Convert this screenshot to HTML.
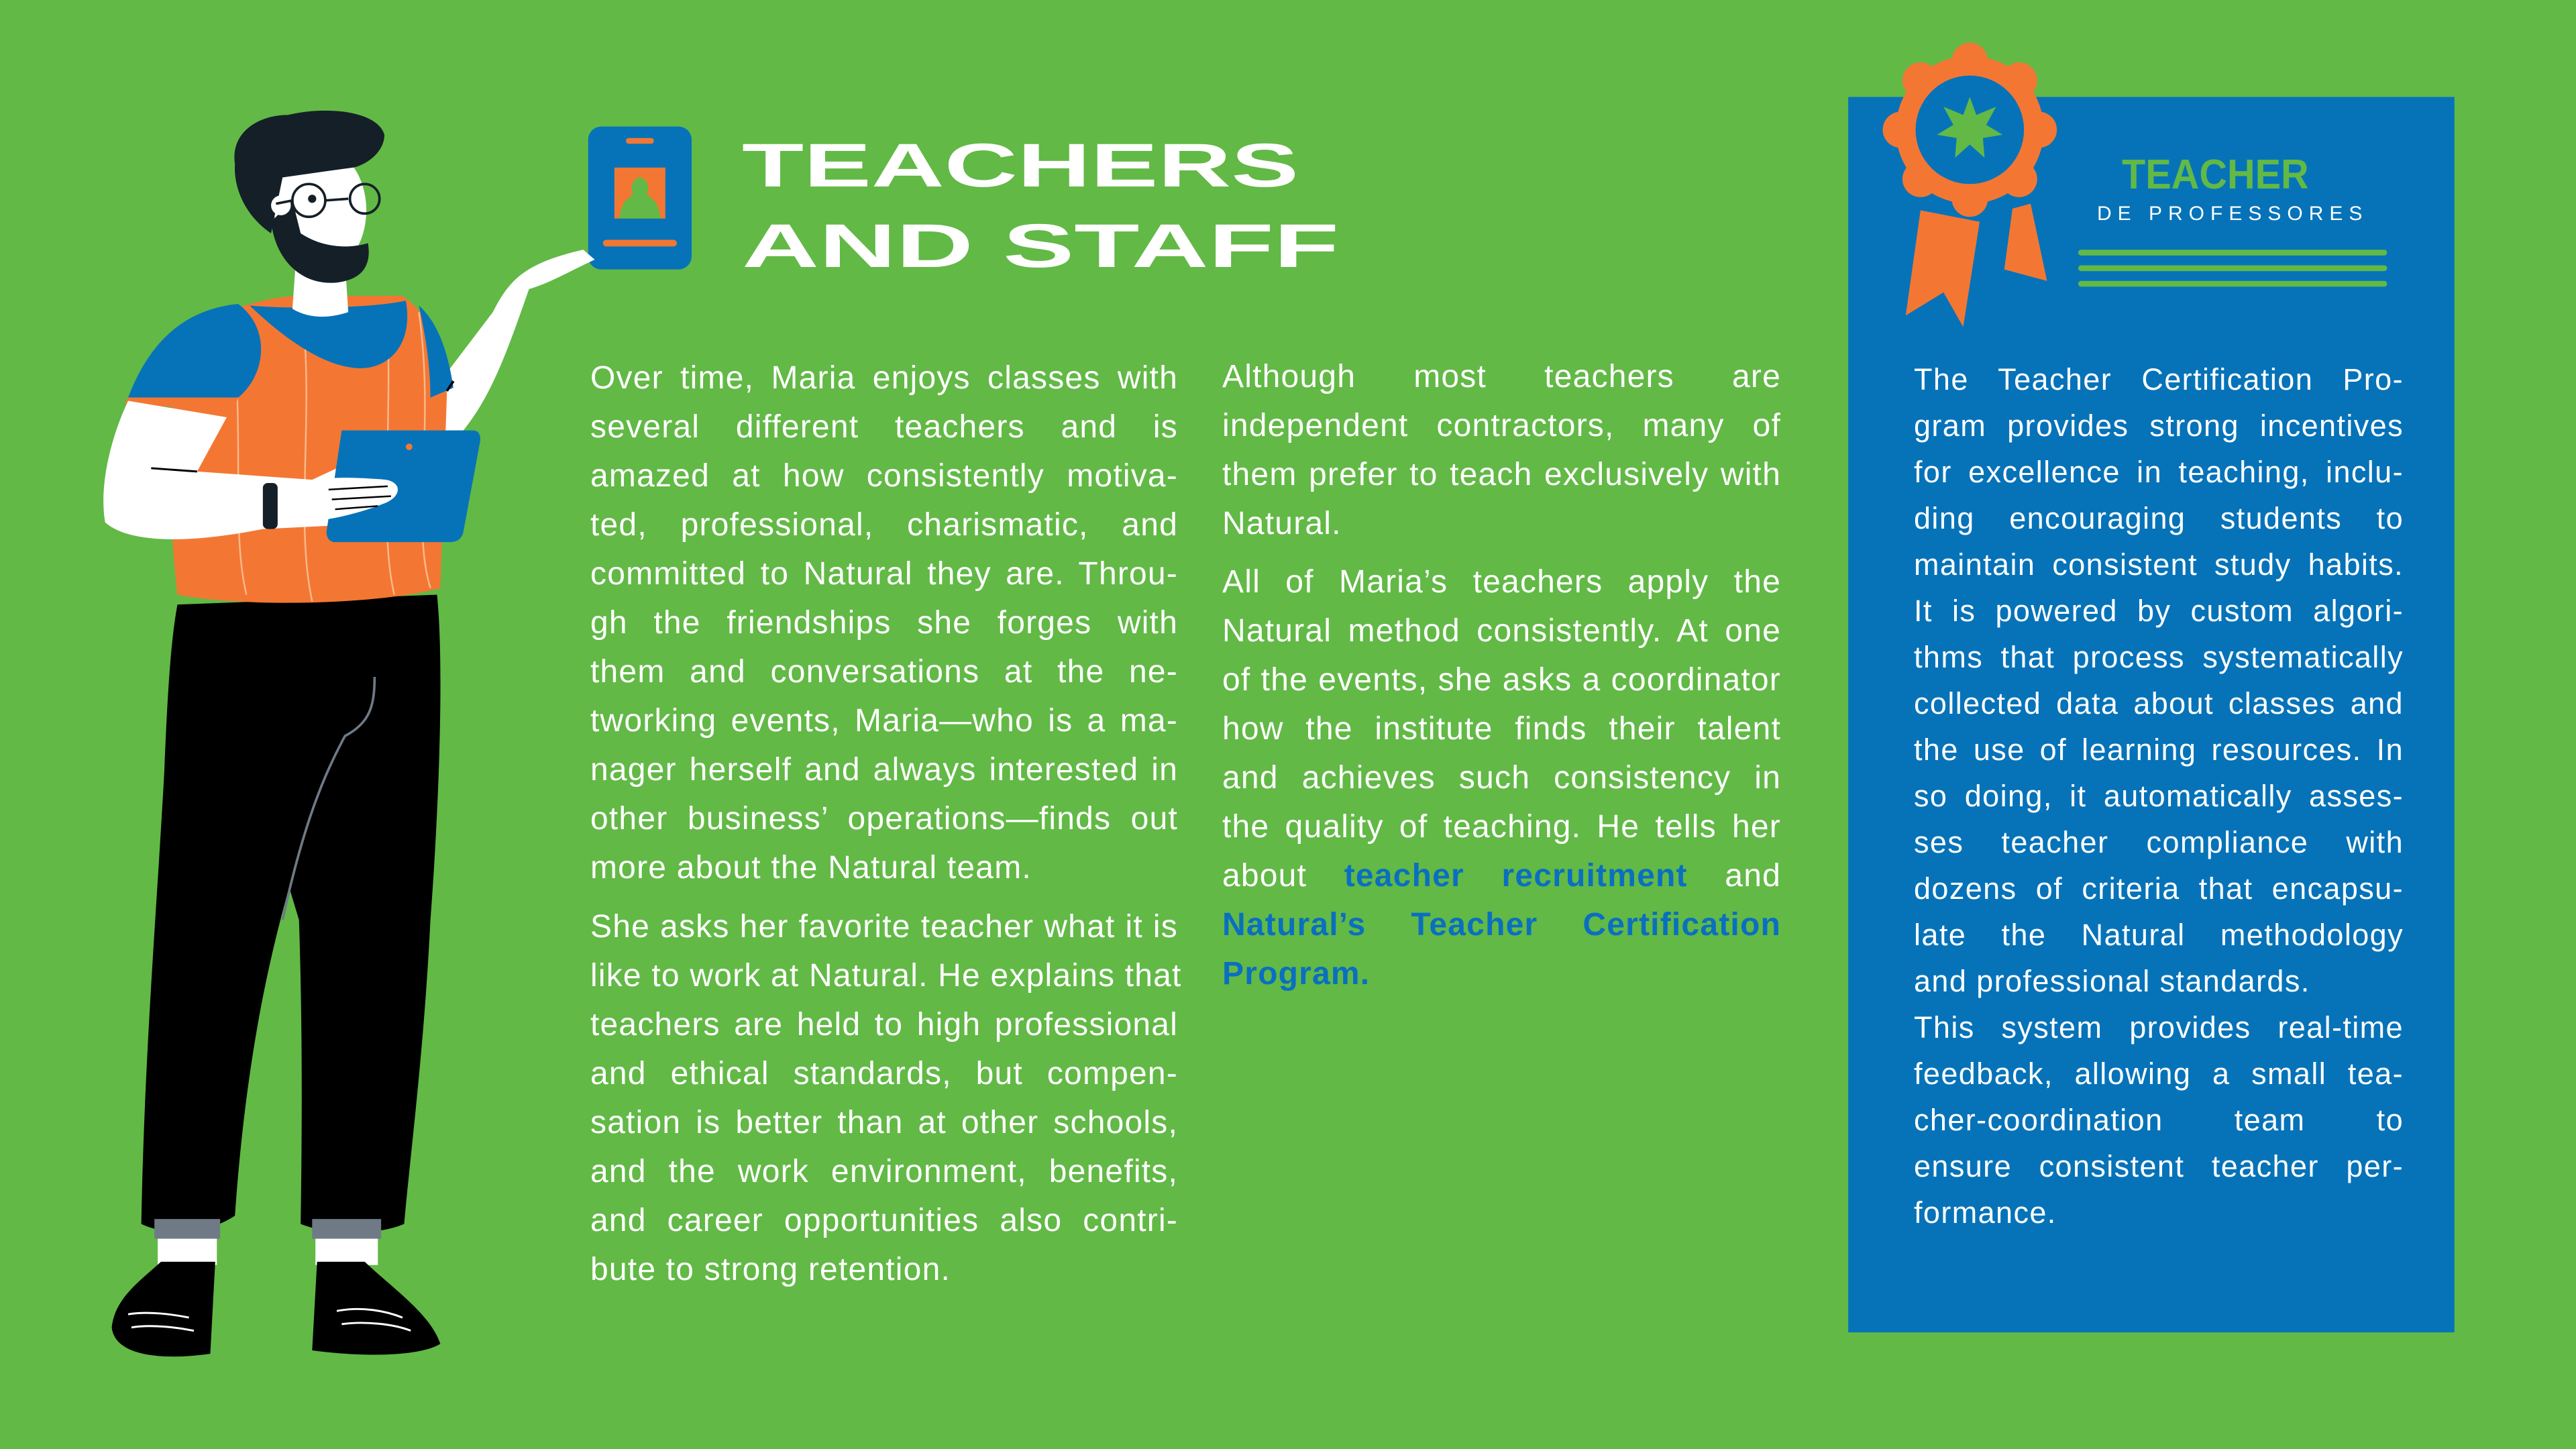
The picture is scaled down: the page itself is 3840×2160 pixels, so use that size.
<!DOCTYPE html>
<html><head><meta charset="utf-8"><style>
*{margin:0;padding:0;box-sizing:border-box}
html,body{width:3840px;height:2160px;overflow:hidden;background:#62b946}
body{position:relative;font-family:"Liberation Sans",sans-serif;color:#fff}
svg.bg{position:absolute;left:0;top:0;width:3840px;height:2160px}
.col{position:absolute;font-size:48px;letter-spacing:1.2px}
.l{display:block;text-align:justify;text-align-last:justify;white-space:nowrap;height:73px;line-height:73px}
.l.e{text-align-last:left}
.c3 .l{height:69px;line-height:69px;font-size:45px;letter-spacing:1.4px}
b{color:#0a6fc0;font-weight:bold}
.t{position:absolute;font-weight:bold;font-size:92px;line-height:92px;transform-origin:0 0;white-space:nowrap}
</style></head><body>
<svg class="bg" viewBox="0 0 1568 882" preserveAspectRatio="none">
 <rect x="1125" y="59" width="369" height="752" fill="#0673b9"/>
 <polygon points="1169,128 1160,192 1183,178 1195,199 1205,135" fill="#f37733"/>
 <polygon points="1225,127 1236,124 1246,171 1220,164" fill="#f37733"/>
 <g fill="#f37733">
  <circle cx="1199" cy="79" r="45"/>
  <circle cx="1199" cy="37" r="11"/><circle cx="1229" cy="49" r="11"/><circle cx="1241" cy="79" r="11"/><circle cx="1229" cy="109" r="11"/>
  <circle cx="1199" cy="121" r="11"/><circle cx="1169" cy="109" r="11"/><circle cx="1157" cy="79" r="11"/><circle cx="1169" cy="49" r="11"/>
 </g>
 <circle cx="1199" cy="79" r="33" fill="#0673b9"/>
 <polygon points="1199,59 1203,70 1215,65 1209,76 1219,82 1207,84 1208,96 1199,88 1190,96 1191,84 1179,82 1189,76 1183,65 1195,70" fill="#62b946"/>
 <g fill="#62b946"><rect x="1265" y="152" width="188" height="3.5" rx="1.7"/><rect x="1265" y="161.5" width="188" height="3.5" rx="1.7"/><rect x="1265" y="171" width="188" height="3.5" rx="1.7"/></g>
 <rect x="358" y="77" width="63" height="87" rx="8" fill="#0673b9"/>
 <rect x="381" y="84" width="17" height="3.5" rx="1.7" fill="#f37733"/>
 <rect x="374" y="102" width="31" height="31" fill="#f37733"/>
 <ellipse cx="389.5" cy="115" rx="5" ry="7" fill="#62b946"/>
 <path d="M377,133 C378,122 384,118 389.5,118 C395,118 401,122 402,133Z" fill="#62b946"/>
 <rect x="367" y="146" width="45" height="4" rx="2" fill="#f37733"/>
 <path d="M108,368 L266,362 C270,400 268,480 262,560 C258,640 250,700 246,745 C230,752 200,752 183,745 C184,680 184,620 182,560 L176,540 C165,580 150,640 143,740 C125,752 100,752 86,745 C88,640 95,560 100,470 C102,420 104,390 108,368Z" fill="#000"/>
 <path d="M228,412 C228,430 225,440 210,448 C198,470 185,500 172,560" stroke="#6f7a86" stroke-width="1.5" fill="none"/>
 <rect x="94" y="742" width="40" height="12" fill="#6f7a86"/><rect x="190" y="742" width="42" height="12" fill="#6f7a86"/>
 <rect x="96" y="754" width="36" height="16" fill="#fff"/><rect x="192" y="754" width="38" height="16" fill="#fff"/>
 <path d="M98,768 C85,780 70,790 68,808 C70,826 100,828 128,824 L131,768Z" fill="#000"/>
 <path d="M193,768 L190,822 C220,826 255,826 268,818 C262,800 240,785 222,768Z" fill="#000"/>
 <path d="M78,800 C90,798 105,800 115,802 M80,808 C92,806 108,808 118,810 M205,798 C220,795 235,798 245,802 M208,806 C222,804 240,806 250,810" stroke="#fff" stroke-width="1.2" fill="none"/>
 <path d="M262,240 L300,190 C310,170 320,160 355,152 L362,158 C345,166 335,172 322,176 C310,210 300,240 282,262 L268,262Z" fill="#fff"/>
 <path d="M110,205 C140,185 170,178 200,180 L245,180 C262,192 270,212 272,240 L270,300 L268,358 C230,368 150,370 108,362 C104,330 100,260 110,205Z" fill="#f37733"/>
 <g stroke="#f9b98a" stroke-width="1" fill="none"><path d="M140,190 C150,260 140,320 150,362"/><path d="M185,200 C190,260 180,320 190,366"/><path d="M235,185 C240,250 230,320 240,362"/><path d="M255,190 C265,260 250,320 262,358"/></g>
 <path d="M78,242 C92,205 115,188 145,185 C165,200 162,228 145,242 Z" fill="#0673b9"/>
 <path d="M78,242 L145,242 L142,250 L76,246Z" fill="#f37733"/>
 <path d="M255,186 C265,195 272,210 276,236 L262,242 C262,220 258,200 255,186Z" fill="#0673b9"/>
 <path d="M152,186 C175,188 225,188 247,183 C252,210 236,226 216,224 C195,222 172,205 152,186Z" fill="#0673b9"/>
 <path d="M180,160 L210,160 L212,190 C200,194 188,194 178,188Z" fill="#fff"/>
 <path d="M78,244 L138,254 L120,287 L190,292 L205,285 L242,290 L242,318 L160,322 C120,330 80,332 64,318 C60,295 68,265 78,244Z" fill="#fff"/>
 <path d="M92,285 L120,287" stroke="#000" stroke-width="1.2"/>
 <path d="M272,238 L276,232" stroke="#000" stroke-width="1.5"/>
 <rect x="160" y="294" width="9" height="28" rx="3" fill="#151f28"/>
 <path d="M208,262 L288,262 C292,262 293,266 292,270 L282,324 C281,328 278,330 274,330 L204,330 C200,330 198,326 199,322Z" fill="#0673b9"/>
 <circle cx="249" cy="272" r="2" fill="#f37733"/>
 <path d="M175,296 C190,290 210,290 235,292 C245,294 244,302 235,306 C215,314 195,318 175,318Z" fill="#fff"/>
 <path d="M200,298 L236,296 M202,304 L238,302 M204,310 L230,308" stroke="#000" stroke-width="1"/>
 <ellipse cx="195" cy="128" rx="28" ry="38" fill="#fff"/>
 <path d="M165,135 C168,160 185,174 205,172 C222,170 226,160 224,148 C210,152 195,150 183,142 L178,122Z" fill="#151f28"/>
 <path d="M143,100 C140,80 158,70 175,70 C200,64 230,68 234,82 C234,92 224,100 215,102 L200,104 L172,108 L165,142 C150,132 142,115 143,100Z" fill="#151f28"/>
 <circle cx="171" cy="125" r="6" fill="#fff"/>
 <g stroke="#151f28" stroke-width="1.5" fill="none"><circle cx="188" cy="122" r="10"/><circle cx="222" cy="121" r="9"/><path d="M198,122 L212,121 M178,122 L168,124"/></g>
 <circle cx="190" cy="121" r="2.5" fill="#151f28"/>
</svg>

<div class="t" style="left:1106px;top:201px;transform:scaleX(1.64)">TEACHERS</div>
<div class="t" style="left:1106px;top:321px;transform:scaleX(1.73)">AND STAFF</div>
<div class="t" style="left:3163px;top:230px;font-size:62px;line-height:62px;color:#62b946;transform:scaleX(0.93)">TEACHER</div>
<div class="t" style="left:3126px;top:304px;font-size:30px;line-height:30px;font-weight:normal;letter-spacing:9px">DE PROFESSORES</div>

<div class="col" style="left:880px;top:527px;width:876px">
<span class="l">Over time, Maria enjoys classes with</span>
<span class="l">several different teachers and is</span>
<span class="l">amazed at how consistently motiva-</span>
<span class="l">ted, professional, charismatic, and</span>
<span class="l">committed to Natural they are. Throu-</span>
<span class="l">gh the friendships she forges with</span>
<span class="l">them and conversations at the ne-</span>
<span class="l">tworking events, Maria—who is a ma-</span>
<span class="l">nager herself and always interested in</span>
<span class="l">other business’ operations—finds out</span>
<span class="l e">more about the Natural team.</span>
</div>
<div class="col" style="left:880px;top:1345px;width:876px">
<span class="l">She asks her favorite teacher what it is</span>
<span class="l">like to work at Natural. He explains that</span>
<span class="l">teachers are held to high professional</span>
<span class="l">and ethical standards, but compen-</span>
<span class="l">sation is better than at other schools,</span>
<span class="l">and the work environment, benefits,</span>
<span class="l">and career opportunities also contri-</span>
<span class="l e">bute to strong retention.</span>
</div>

<div class="col" style="left:1822px;top:525px;width:833px">
<span class="l">Although most teachers are</span>
<span class="l">independent contractors, many of</span>
<span class="l">them prefer to teach exclusively with</span>
<span class="l e">Natural.</span>
</div>
<div class="col" style="left:1822px;top:831px;width:833px">
<span class="l">All of Maria’s teachers apply the</span>
<span class="l">Natural method consistently. At one</span>
<span class="l">of the events, she asks a coordinator</span>
<span class="l">how the institute finds their talent</span>
<span class="l">and achieves such consistency in</span>
<span class="l">the quality of teaching. He tells her</span>
<span class="l">about <b>teacher recruitment</b> and</span>
<span class="l"><b>Natural’s Teacher Certification</b></span>
<span class="l e"><b>Program.</b></span>
</div>

<div class="col c3" style="left:2853px;top:531px;width:730px">
<span class="l">The Teacher Certification Pro-</span>
<span class="l">gram provides strong incentives</span>
<span class="l">for excellence in teaching, inclu-</span>
<span class="l">ding encouraging students to</span>
<span class="l">maintain consistent study habits.</span>
<span class="l">It is powered by custom algori-</span>
<span class="l">thms that process systematically</span>
<span class="l">collected data about classes and</span>
<span class="l">the use of learning resources. In</span>
<span class="l">so doing, it automatically asses-</span>
<span class="l">ses teacher compliance with</span>
<span class="l">dozens of criteria that encapsu-</span>
<span class="l">late the Natural methodology</span>
<span class="l e">and professional standards.</span>
<span class="l">This system provides real-time</span>
<span class="l">feedback, allowing a small tea-</span>
<span class="l">cher-coordination team to</span>
<span class="l">ensure consistent teacher per-</span>
<span class="l e">formance.</span>
</div>
</body></html>
